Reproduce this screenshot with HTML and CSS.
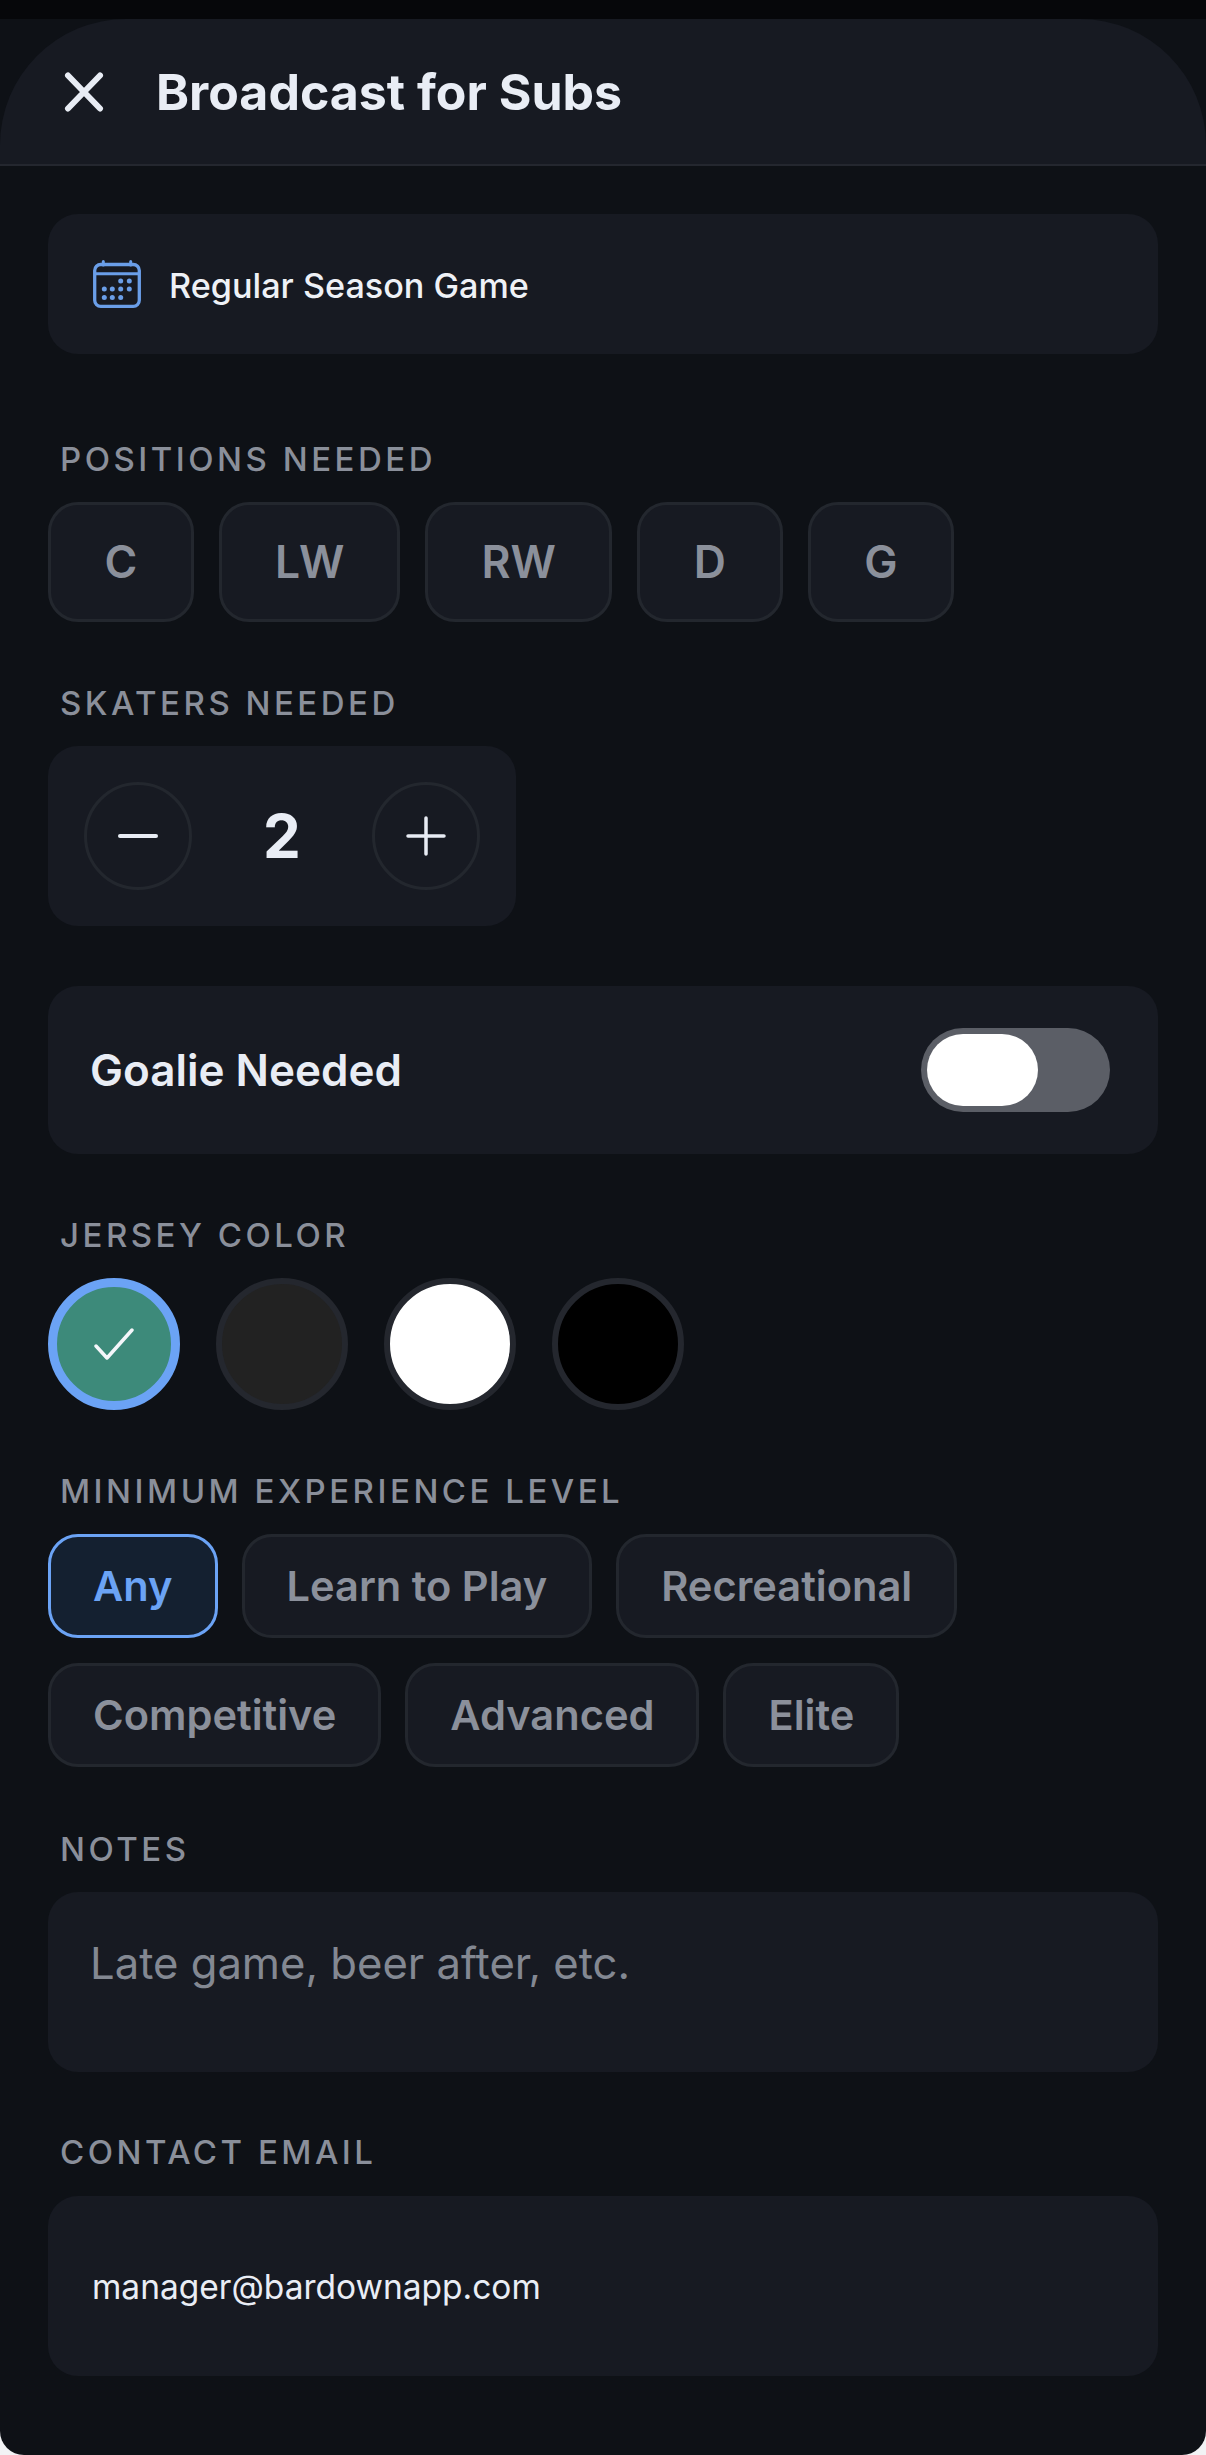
FILE: index.html
```html
<!DOCTYPE html>
<html lang="en">
<head>
<meta charset="utf-8">
<title>Broadcast for Subs</title>
<link rel="stylesheet" href="styles.css">
</head>
<body>
<div class="screen">
  <header class="header">
    <svg class="close-icon" viewBox="0 0 40 40" width="40" height="40" fill="none" stroke="#e8ecf4" stroke-width="6" stroke-linecap="round"><path d="M4 3.500 L36 36.500 M36 3.500 L4 36.500"/></svg>
    <h1 class="title">Broadcast for Subs</h1>
  </header>
  <main class="content">
    <div class="card game-card">
      <svg class="cal-icon" viewBox="0 0 48 48" width="48" height="48" fill="none" stroke="#6a9ee8">
        <rect x="1.700" y="4.500" width="44.600" height="41.800" rx="6" stroke-width="3.300"/>
        <path d="M1.700 13.800 H46.300" stroke-width="3"/>
        <path d="M10.300 1.500 V5 M37.700 1.500 V5" stroke-width="3" stroke-linecap="round"/>
        <g fill="#6a9ee8" stroke="none">
          <circle cx="27.700" cy="21" r="2.500"/><circle cx="36.300" cy="21" r="2.500"/>
          <circle cx="11.300" cy="29" r="2.500"/><circle cx="19.300" cy="29" r="2.500"/><circle cx="27.700" cy="29" r="2.500"/><circle cx="36.300" cy="29" r="2.500"/>
          <circle cx="11.300" cy="37.500" r="2.500"/><circle cx="19.300" cy="37.500" r="2.500"/><circle cx="27.700" cy="37.500" r="2.500"/>
        </g>
      </svg>
      <span class="game-name">Regular Season Game</span>
    </div>

    <div class="label label-positions">POSITIONS NEEDED</div>
    <div class="chips chips-pos">
      <div class="chip pos-chip">C</div>
      <div class="chip pos-chip">LW</div>
      <div class="chip pos-chip">RW</div>
      <div class="chip pos-chip">D</div>
      <div class="chip pos-chip">G</div>
    </div>

    <div class="label label-skaters">SKATERS NEEDED</div>
    <div class="card stepper">
      <div class="step-btn">
        <svg viewBox="0 0 40 40" width="40" height="40" fill="none" stroke="#e8ecf4" stroke-width="4" stroke-linecap="round"><path d="M2 20 H38"/></svg>
      </div>
      <div class="step-value">2</div>
      <div class="step-btn">
        <svg viewBox="0 0 40 40" width="40" height="40" fill="none" stroke="#e8ecf4" stroke-width="3.500" stroke-linecap="round"><path d="M2 20 H38 M20 2 V38"/></svg>
      </div>
    </div>

    <div class="card goalie">
      <span class="goalie-text">Goalie Needed</span>
      <div class="toggle"><div class="knob"></div></div>
    </div>

    <div class="label label-jersey">JERSEY COLOR</div>
    <div class="swatches">
      <div class="swatch swatch-green">
        <svg viewBox="0 0 40 32" width="40" height="32" fill="none" stroke="#f4f6fa" stroke-width="3.500" stroke-linecap="round" stroke-linejoin="round"><path d="M2 18 L13 30 L38 2"/></svg>
      </div>
      <div class="swatch swatch-dark"></div>
      <div class="swatch swatch-white"></div>
      <div class="swatch swatch-black"></div>
    </div>

    <div class="label label-exp">MINIMUM EXPERIENCE LEVEL</div>
    <div class="chips chips-exp">
      <div class="chip exp-chip exp-active">Any</div>
      <div class="chip exp-chip">Learn to Play</div>
      <div class="chip exp-chip">Recreational</div>
      <div class="chip exp-chip">Competitive</div>
      <div class="chip exp-chip">Advanced</div>
      <div class="chip exp-chip">Elite</div>
    </div>

    <div class="label label-notes">NOTES</div>
    <div class="card field notes">Late game, beer after, etc.</div>

    <div class="label label-email">CONTACT EMAIL</div>
    <div class="card field email">manager@bardownapp.com</div>
  </main>
</div>
</body>
</html>
```

FILE: styles.css
```css
* { box-sizing: border-box; }
html, body { margin: 0; padding: 0; background: #f2f3f5; }
body { width: 1206px; height: 2455px; font-family: Inter, "Liberation Sans", sans-serif; overflow: hidden; }
.screen {
  width: 1206px; height: 2455px; background: #0e1116;
  border-top: 19px solid #06070a;
  border-radius: 0 0 24px 24px;
  overflow: hidden;
}
.header {
  height: 147px;
  background: #171a22;
  border-bottom: 2px solid #24272f;
  border-radius: 126px 126px 0 0;
  display: flex; align-items: center;
  padding: 0 0 0 64px;
  gap: 52px;
}
.title { margin: 0; font-size: 50px; font-weight: 650; color: #e9edf5; }
.content { padding: 48px 48px 0; }
.card { background: #171a22; border-radius: 30px; }
.game-card { height: 140px; display: flex; align-items: center; padding: 0 45px; gap: 28px; }
.game-name { font-size: 34.200px; font-weight: 500; color: #eef1f6; padding-top: 2px; }
.label { font-size: 33px; font-weight: 500; letter-spacing: 3.500px; color: #8a8f9a; line-height: 38px; padding-left: 12px; }
.label-positions { margin-top: 86px; }
.chips { display: flex; flex-wrap: wrap; }
.chips-pos { margin-top: 24px; gap: 25px; }
.chip { background: #171a22; border: 3px solid #23272e; border-radius: 30px; display: flex; align-items: center; justify-content: center; color: #8b909b; }
.pos-chip { height: 120px; min-width: 146px; padding: 0 53px; font-size: 44.500px; font-weight: 600; }
.label-skaters { margin-top: 62px; }
.stepper { margin-top: 24px; width: 468px; height: 180px; display: flex; align-items: center; justify-content: space-between; padding: 0 36px; }
.step-btn { width: 108px; height: 108px; border-radius: 50%; border: 3px solid #23272e; display: flex; align-items: center; justify-content: center; }
.step-value { font-size: 60px; font-weight: 700; color: #e9edf5; }
.goalie { margin-top: 60px; height: 168px; display: flex; align-items: center; justify-content: space-between; padding: 0 48px 0 42px; }
.goalie-text { font-size: 44px; font-weight: 600; color: #e9edf5; padding-bottom: 1px; }
.toggle { width: 189px; height: 84px; border-radius: 42px; background: #5b5e66; padding: 6px; }
.knob { width: 111px; height: 72px; border-radius: 36px; background: #fff; }
.label-jersey { margin-top: 62px; }
.swatches { margin-top: 24px; display: flex; gap: 36px; }
.swatch { width: 132px; height: 132px; border-radius: 50%; border: 6px solid #24272e; display: flex; align-items: center; justify-content: center; }
.swatch-green { background: #3d8a7a; border: 9px solid #6ba3f5; }
.swatch-dark { background: #222222; }
.swatch-white { background: #ffffff; }
.swatch-black { background: #000000; }
.label-exp { margin-top: 62px; }
.chips-exp { margin-top: 24px; width: 1000px; gap: 25px 24px; }
.exp-chip { height: 104px; padding: 0 42px; font-size: 41.600px; font-weight: 600; }
.exp-active { background: #142030; border-color: #6ba3f5; color: #6ba3f5; }
.label-notes { margin-top: 63px; }
.field { height: 180px; display: flex; padding: 0 42px; }
.notes { margin-top: 24px; font-size: 43.600px; color: #838892; padding-top: 45px; }
.label-email { margin-top: 61px; }
.email { margin-top: 25px; font-size: 33.500px; color: #e9edf5; align-items: center; padding: 2px 42px 0 44px; }
```
